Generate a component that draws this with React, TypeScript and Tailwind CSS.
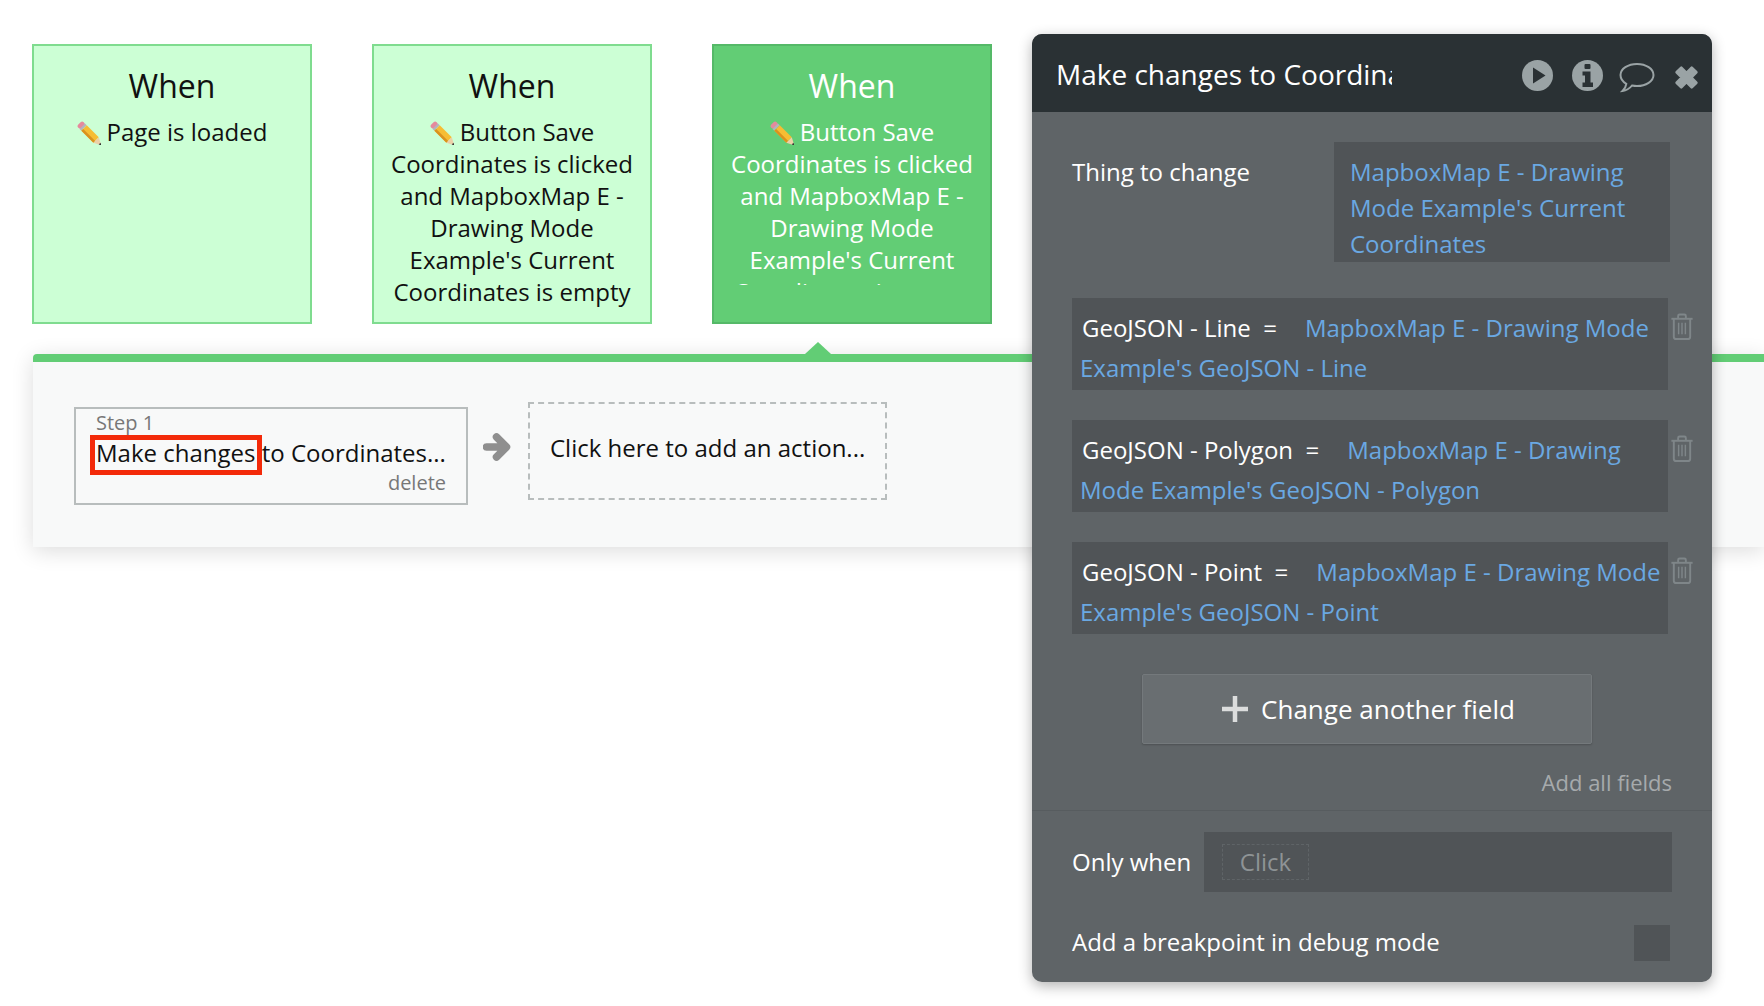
const FONT = "font-['Open_Sans',sans-serif]";

function Pencil({ className }: { className?: string }) {
  return (
    <svg viewBox="0 0 24 24" className={className} width="24" height="24">
      <g transform="translate(3.5 3.5) rotate(45)">
        <rect x="-1.5" y="-3.8" width="5" height="7.6" rx="2.2" fill="#e58a9c" />
        <rect x="2.5" y="-3.8" width="2.5" height="7.6" fill="#b4b4bc" />
        <rect x="5" y="-3.8" width="17" height="7.6" fill="#f6bd33" />
        <rect x="5" y="1.2" width="17" height="2.6" fill="#d9921f" />
        <path d="M22 -3.8 L29.5 0 L22 3.8 Z" fill="#ecd0a8" />
        <path d="M27 -1.3 L29.5 0 L27 1.3 Z" fill="#333" />
      </g>
    </svg>
  );
}

function Trash() {
  return (
    <svg viewBox="0 0 24 28" width="26" height="27" fill="none" stroke="#7f8689" strokeWidth="2" className="absolute left-[597px] top-[15px]">
      <path d="M1 6 H23" />
      <path d="M8 6 V3 Q8 1.5 9.5 1.5 H14.5 Q16 1.5 16 3 V6" />
      <path d="M3.5 6 V24.5 Q3.5 27 6 27 H18 Q20.5 27 20.5 24.5 V6" />
      <path d="M8.5 10 V22 M12 10 V22 M15.5 10 V22" strokeWidth="1.5" />
    </svg>
  );
}

function WhenCard({ active, clip, lines }: { active?: boolean; clip?: boolean; lines: string[] }) {
  return (
    <div
      className={
        active
          ? "w-[280px] h-[280px] border-2 border-[#55b968] bg-[#62cd75] text-white flex flex-col items-center"
          : "w-[280px] h-[280px] border-2 border-[#7fdc8f] bg-[#ccffd5] text-[#111] flex flex-col items-center"
      }
    >
      <div className="text-[32px] leading-[44px] mt-[18px]">When</div>
      <div className={clip ? "mt-[8px] w-full h-[169px] overflow-hidden text-[24px] leading-[32px] text-center" : "mt-[8px] w-full text-[24px] leading-[32px] text-center"}>
        {lines.map((line, i) => (
          <div key={i} className="flex justify-center items-center whitespace-nowrap">
            {i === 0 && <Pencil className="mr-[6px] mt-[2px]" />}
            <span>{line}</span>
          </div>
        ))}
      </div>
    </div>
  );
}

function FieldRow({ label, value }: { label: string; value: string }) {
  return (
    <div className="relative w-[596px] h-[92px] bg-[#505457] pt-[10px] pl-[8px] text-[24px] leading-[40px]">
      <Trash />
      <span className="ml-[2px] text-white whitespace-pre">{label}  =</span>
      <span className="text-[#6aa8e2] ml-[28px]">{value}</span>
    </div>
  );
}

export default function App() {
  const buttonLines = [
    "Button Save",
    "Coordinates is clicked",
    "and MapboxMap E -",
    "Drawing Mode",
    "Example's Current",
    "Coordinates is empty",
  ];

  return (
    <div className={`${FONT} relative w-[1764px] h-[1006px] overflow-hidden bg-white`}>
      <div className="flex gap-[60px] pl-[32px] pt-[44px]">
        <WhenCard lines={["Page is loaded"]} />
        <WhenCard lines={buttonLines} />
        <WhenCard active clip lines={buttonLines} />
      </div>

      {/* actions strip */}
      <div className="relative ml-[33px] mt-[30px] h-[193px] border-t-[8px] border-[#62cd75] bg-[#f8f9f9] shadow-[0_4px_22px_rgba(0,0,0,0.14)] rounded-tl-[4px] flex items-start pl-[41px]">
        <svg viewBox="0 0 26 12" width="26" height="12" className="absolute left-[772px] top-[-20px]">
          <path d="M13 0 L26 12 H0 Z" fill="#62cd75" />
        </svg>

        <div className="relative mt-[45px] w-[394px] h-[98px] border-2 border-[#b8bdbd] pl-[20px] pr-[20px]">
          <div className="text-[20px] leading-[24px] mt-[2px] text-[#777]">Step 1</div>
          <div className="text-[24px] leading-[32px] mt-[2px] text-[#111] whitespace-nowrap">Make changes to Coordinates...</div>
          <div className="text-[20px] leading-[24px] mt-[2px] text-right text-[#777]">delete</div>
          <div className="absolute left-[14px] top-[26px] w-[172px] h-[40px] border-[5px] border-[#f32a0a]" />
        </div>

        <svg viewBox="0 0 28 28" width="28" height="28" className="ml-[15px] mt-[71px]">
          <path d="M3.5 14 H22 M13.5 4 L23.5 14 L13.5 24" fill="none" stroke="#8f8f8f" strokeWidth="7.5" strokeLinejoin="round" strokeLinecap="round" />
        </svg>

        <div className="ml-[17px] mt-[40px] w-[359px] h-[98px] border-2 border-dashed border-[#b8bdbd] pl-[20px] pt-[28px] text-[24px] leading-[32px] text-[#111] whitespace-nowrap">
          Click here to add an action...
        </div>
      </div>

      {/* property editor */}
      <div className="absolute left-[1032px] top-[34px] w-[680px] h-[948px] rounded-[10px] overflow-hidden bg-[#5f6467] shadow-[0_4px_14px_rgba(0,0,0,0.3)]">
        <div className="relative h-[78px] bg-[#2a3134] flex items-center pl-[24px] pt-[2px]">
          <div className="w-[336px] overflow-hidden whitespace-nowrap text-[28px] leading-[40px] text-white">Make changes to Coordinates...</div>
          <svg viewBox="0 0 31 31" width="31" height="31" className="absolute left-[490px] top-[26px]">
            <circle cx="15.5" cy="15.5" r="15.5" fill="#9aa3a5" />
            <path d="M11 7.5 L23.5 15.5 L11 23.5 Z" fill="#2a3134" />
          </svg>
          <svg viewBox="0 0 31 31" width="31" height="31" className="absolute left-[540px] top-[26px]">
            <circle cx="15.5" cy="15.5" r="15.5" fill="#9aa3a5" />
            <rect x="12.5" y="4" width="6" height="5" rx="1" fill="#2a3134" />
            <path d="M10.5 11.5 H18.5 V22.5 H21 V27 H10.5 V22.5 H13 V15.5 H10.5 Z" fill="#2a3134" />
          </svg>
          <svg viewBox="0 0 36 32" width="36" height="32" className="absolute left-[587px] top-[27px]" fill="none" stroke="#9aa3a5" strokeWidth="2">
            <path d="M18 3 C27 3 34.5 7.8 34.5 14 C34.5 20.2 27 25 18 25 C16 25 14.5 24.8 13 24.5 C11 27 8 29.5 3.5 30 C5.5 28 7 25.5 7.3 22.8 C3.8 20.8 1.5 17.6 1.5 14 C1.5 7.8 9 3 18 3 Z" />
          </svg>
          <svg viewBox="0 0 24 24" width="25" height="25" className="absolute left-[642px] top-[31px]">
            <path d="M2.5 7 L7 2.5 L12 7.5 L17 2.5 L21.5 7 L16.5 12 L21.5 17 L17 21.5 L12 16.5 L7 21.5 L2.5 17 L7.5 12 Z" fill="#9aa3a5" stroke="#9aa3a5" strokeWidth="2.5" strokeLinejoin="round" />
          </svg>
        </div>

        <div className="flex items-start mt-[30px] ml-[40px]">
          <div className="w-[262px] text-[24px] leading-[36px] text-white pt-[12px]">Thing to change</div>
          <div className="w-[336px] h-[120px] bg-[#505457] pl-[16px] pt-[12px] text-[24px] leading-[36px] text-[#6aa8e2]">
            MapboxMap E - Drawing Mode Example's Current Coordinates
          </div>
        </div>

        <div className="ml-[40px] mt-[36px] flex flex-col gap-[30px]">
          <FieldRow label="GeoJSON - Line" value="MapboxMap E - Drawing Mode Example's GeoJSON - Line" />
          <FieldRow label="GeoJSON - Polygon" value="MapboxMap E - Drawing Mode Example's GeoJSON - Polygon" />
          <FieldRow label="GeoJSON - Point" value="MapboxMap E - Drawing Mode Example's GeoJSON - Point" />
        </div>

        <div className="ml-[110px] mt-[40px] w-[450px] h-[70px] rounded-[2px] border border-[#74797c] bg-[#696e71] shadow-[0_1px_2px_rgba(0,0,0,0.2)] flex items-center justify-center pl-[2px] text-[26px] text-white">
          <svg viewBox="0 0 28 28" width="28" height="28" className="mr-[12px]">
            <path d="M14 1 V27 M1 14 H27" stroke="#dcdddd" strokeWidth="4.5" />
          </svg>
          Change another field
        </div>

        <div className="mt-[22px] mr-[40px] text-right text-[22px] leading-[32px] text-[#a6aaac]">Add all fields</div>

        <div className="mt-[12px] border-t border-[#575c5f] flex items-center pl-[40px] pt-[21px]">
          <div className="w-[132px] text-[24px] text-white whitespace-nowrap">Only when</div>
          <div className="w-[468px] h-[60px] bg-[#505457] flex items-center pl-[18px]">
            <div className="w-[87px] h-[36px] border border-dashed border-[#5f6467] flex items-center justify-center text-[24px] text-[#8e9395]">Click</div>
          </div>
        </div>

        <div className="flex items-center justify-between ml-[40px] mr-[42px] mt-[33px] h-[36px]">
          <div className="text-[24px] leading-[32px] pb-[3px] text-white whitespace-nowrap">Add a breakpoint in debug mode</div>
          <div className="w-[36px] h-[36px] bg-[#505457]" />
        </div>
      </div>
    </div>
  );
}
